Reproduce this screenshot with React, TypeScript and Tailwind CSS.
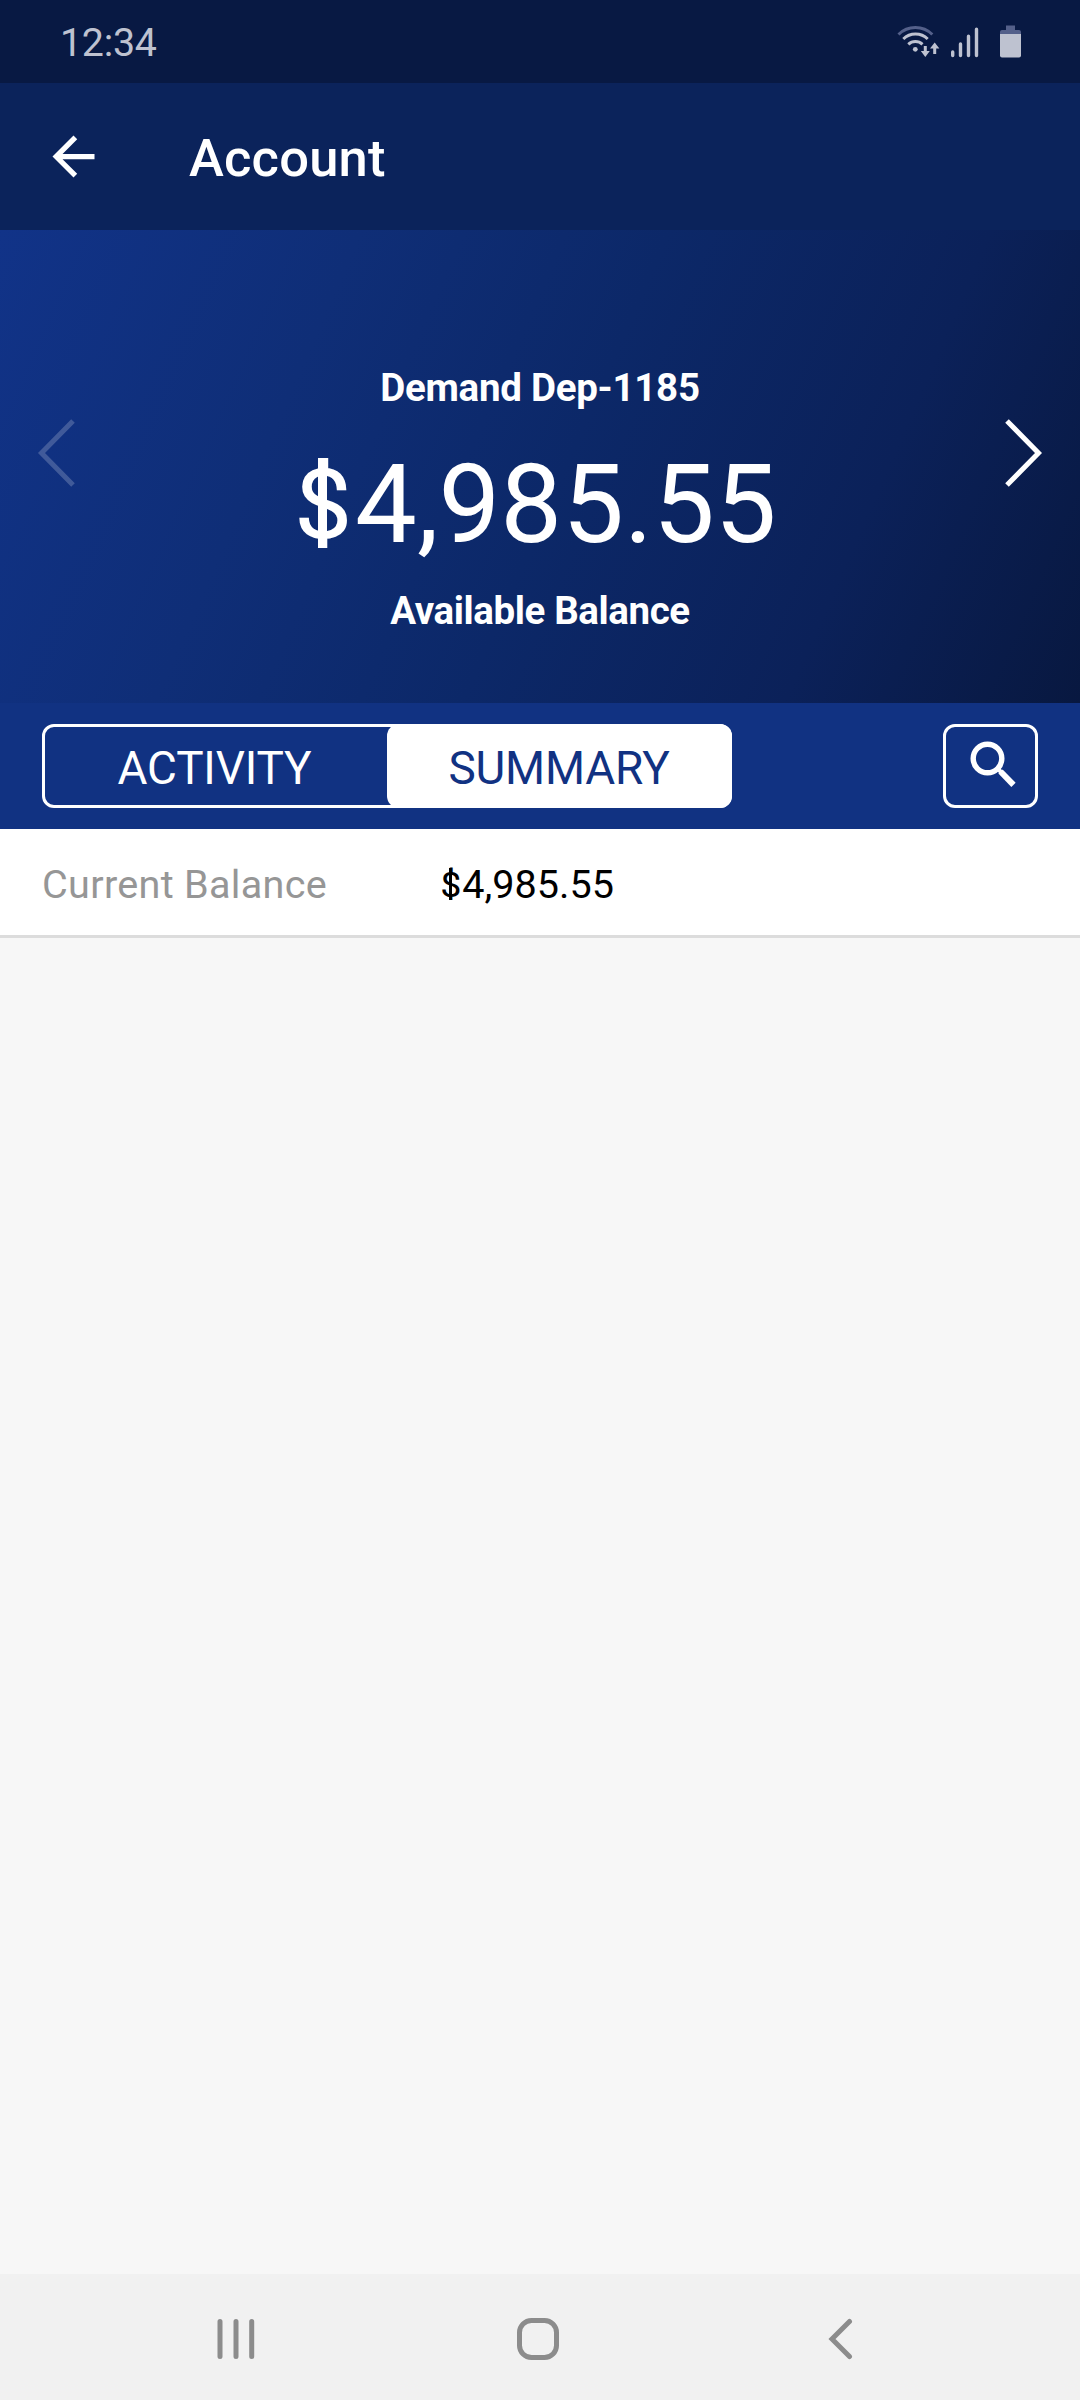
function StatusIcons() {
  return (
    <svg className="h-[42px] w-[130px]" viewBox="894 20 130 42" fill="none" stroke="#bec2d0" strokeLinecap="butt">
      <path d="M898.5 33.5 A24 24 0 0 1 932.3 33.5" stroke="#54608a" strokeWidth="3" />
      <path d="M903.3 38 A17.5 17.5 0 0 1 927.7 38" strokeWidth="3" />
      <path d="M908.3 43.3 A10.5 10.5 0 0 1 922.5 43.3" strokeWidth="3" />
      <circle cx="915.3" cy="48.3" r="2.4" fill="#bec2d0" stroke="none" />
      <path d="M923.8 45 h3 v5 h3 l-4.5 6 l-4.5 -6 h3z" fill="#bec2d0" stroke="none" />
      <path d="M933.2 53 h3 v-5.5 h3.2 l-4.7 -6 l-4.7 6 h3.2z" fill="#bec2d0" stroke="none" />
      <g strokeWidth="3.4" strokeLinecap="round">
        <path d="M952.7 51 V54.5 M960.5 43 V54.5 M968.5 35.3 V54.5 M976.5 28.3 V54.5" />
      </g>
      <path d="M1006 24.5 h9 v4.5 h4 q2 0 2 2 v2 h-21 v-2 q0 -2 2 -2 h4z" fill="#54608a" stroke="none" />
      <path d="M1000 33 h21 v21.5 q0 2 -2 2 h-17 q-2 0 -2 -2z" fill="#bec2d0" stroke="none" />
    </svg>
  );
}

function StatusBar() {
  return (
    <div className="flex h-[83px] items-center justify-between bg-[#081943] pr-[56px] pl-[60px]">
      <span className="pt-[2px] text-[39.4px] leading-[46px] tracking-[-0.3px] text-[#bec2d0]">12:34</span>
      <StatusIcons />
    </div>
  );
}

function Header() {
  return (
    <header className="flex h-[147px] items-center bg-[#0b235b] pl-[42px] text-white">
      <svg className="h-[63px] w-[63px]" viewBox="0 0 24 24" fill="currentColor">
        <path d="M20 11H7.83l5.59-5.59L12 4l-8 8 8 8 1.41-1.41L7.83 13H20v-2z" />
      </svg>
      <h1 className="ml-[84px] pt-[2px] text-[52.5px] leading-[62px] font-medium tracking-[0.2px]">Account</h1>
    </header>
  );
}

/* Compact dollar sign with an unbroken bar, set in the advance width of a digit. */
function Amount({ value }: { value: string }) {
  return (
    <>
      <span className="relative top-[-0.036em] left-[-0.012em] inline-block w-[0.5615em] text-center leading-none">
        <span className="inline-block scale-x-[1.08] text-[0.88em] leading-none">$</span>
        <span className="absolute top-[0.113em] left-[calc(50%-0.04em)] h-[0.818em] w-[0.08em] bg-current" />
      </span>
      {value}
    </>
  );
}

function Hero() {
  return (
    <section className="flex h-[473px] items-center justify-between bg-[linear-gradient(113.65deg,#113388_0%,#0f2e77_28%,#0c2868_52%,#0b2159_77%,#081840_100%)] px-[37px] text-white">
      <svg className="mb-[27px] h-[70px] w-[39px]" viewBox="0 0 39 70" fill="none" stroke="currentColor" strokeWidth="5" opacity="0.2">
        <path d="M36 3 L4.5 35 L36 67" />
      </svg>
      <div className="flex flex-col items-center pt-[66px]">
        <div className="text-[38.5px] leading-[46px] font-bold tracking-[-0.27px]">Demand Dep-1185</div>
        <div className="mt-[29px] pr-[10px] text-[110px] leading-[129px]">
          <Amount value="4,985.55" />
        </div>
        <div className="mt-[19px] text-[38.5px] leading-[46px] font-bold tracking-[-0.4px]">Available Balance</div>
      </div>
      <svg className="mb-[27px] h-[70px] w-[39px]" viewBox="0 0 39 70" fill="none" stroke="currentColor" strokeWidth="5">
        <path d="M3 3 L34.5 35 L3 67" />
      </svg>
    </section>
  );
}

function Toolbar() {
  return (
    <div className="flex h-[126px] items-center justify-between bg-[#113282] px-[42px]">
      <div className="flex h-[84px] w-[690px] rounded-[12px] border-[3px] border-white text-[45.9px] leading-[54px] tracking-[-0.15px]">
        <button className="w-[342px] pt-[3px] pr-[3px] text-white">ACTIVITY</button>
        <button className="-my-[3px] -mr-[3px] flex-1 rounded-[12px] bg-white pt-[3px] pr-[1px] text-[#113282]">SUMMARY</button>
      </div>
      <button className="flex h-[84px] w-[95px] items-center justify-center rounded-[12px] border-[3px] border-white">
        <svg className="mb-[4px] ml-[5px] h-[46px] w-[46px]" viewBox="0 0 46 46" fill="none" stroke="white">
          <circle cx="17.5" cy="17.5" r="14.3" strokeWidth="5.4" />
          <path d="M28.5 28.5 L31 31" strokeWidth="4" />
          <path d="M30.5 30.5 L43.5 43.8" strokeWidth="6" />
        </svg>
      </button>
    </div>
  );
}

function NavBar() {
  return (
    <nav className="flex h-[126px] items-center bg-[#f1f1f1] pt-[4px] pl-[217px]">
      <svg className="h-[42px] w-[38px]" viewBox="0 0 38 42" fill="none" stroke="#8c8c8c" strokeWidth="5" strokeLinecap="round">
        <path d="M3 3.5 V38.5 M19 3.5 V38.5 M34.7 3.5 V38.5" />
      </svg>
      <svg className="ml-[262px] h-[42px] w-[42px]" viewBox="0 0 42 42" fill="none" stroke="#8c8c8c" strokeWidth="5">
        <rect x="2.5" y="2.5" width="37" height="37" rx="12" />
      </svg>
      <svg className="ml-[269px] h-[42px] w-[26px]" viewBox="0 0 26 42" fill="none" stroke="#8c8c8c" strokeWidth="5" strokeLinecap="round">
        <path d="M21.5 3.5 L4 21 L21.5 38.5" />
      </svg>
    </nav>
  );
}

export default function App() {
  return (
    <div className="flex h-[2400px] w-[1080px] flex-col bg-[#f7f7f7] font-['Roboto',sans-serif]">
      <StatusBar />
      <Header />
      <Hero />
      <Toolbar />
      <div className="flex h-[109px] items-center border-b-[3px] border-[#dcdcdc] bg-white pt-[6px] pl-[42px] text-[39.6px] leading-[46px]">
        <span className="w-[398px] tracking-[0.3px] text-[#969696]">Current Balance</span>
        <span className="text-black">
          <Amount value="4,985.55" />
        </span>
      </div>
      <main className="flex-1" />
      <NavBar />
    </div>
  );
}
